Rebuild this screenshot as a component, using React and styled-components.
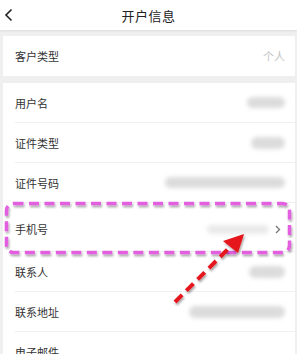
import styled, { createGlobalStyle } from "styled-components";

const GlobalStyle = createGlobalStyle`
  html, body { margin: 0; padding: 0; background: #efefef; }
  body { font-family: "Noto Sans CJK SC", "Noto Sans", sans-serif; }
`;

const rows = [
  { label: "用户名", blob: { w: 38, h: 11 } },
  { label: "证件类型", blob: { w: 34, h: 12 } },
  { label: "证件号码", blob: { w: 120, h: 11 } },
  { label: "手机号", blob: { w: 62, h: 9 }, arrow: true, tall: true },
  { label: "联系人", blob: { w: 36, h: 12 } },
  { label: "联系地址", blob: { w: 96, h: 12 } },
  { label: "电子邮件", blob: null },
];

export default function App() {
  return (
    <Page>
      <GlobalStyle />
      <Header>
        <Back>
          <svg width="10" height="14" viewBox="0 0 10 14">
            <path d="M7.5 1.5 L2 7 L7.5 12.5" fill="none" stroke="#222" strokeWidth="1.6" />
          </svg>
        </Back>
        <Title>开户信息</Title>
      </Header>
      <Card>
        <Row>
          <Label>客户类型</Label>
          <Value>个人</Value>
        </Row>
      </Card>
      <Card>
        {rows.map((r, i) => (
          <Row key={r.label} $tall={r.tall} $line={i < rows.length - 1}>
            <Label>{r.label}</Label>
            <Right>
              {r.blob && <Blob style={{ width: r.blob.w, height: r.blob.h }} $faint={r.arrow} />}
              {r.arrow && (
                <svg width="6" height="9" viewBox="0 0 6 9">
                  <path d="M1 1 L4.5 4.5 L1 8" fill="none" stroke="#777" strokeWidth="1.3" />
                </svg>
              )}
            </Right>
          </Row>
        ))}
      </Card>
      <Pointer width="297" height="354" viewBox="0 0 297 354">
        <defs>
          <filter id="sh" x="-20%" y="-20%" width="140%" height="140%">
            <feDropShadow dx="1" dy="2" stdDeviation="1.2" floodColor="#000" floodOpacity="0.35" />
          </filter>
        </defs>
        <g filter="url(#sh)">
          <rect x="6.5" y="203.5" width="283" height="49" rx="7" fill="none" stroke="#e25ee0" strokeWidth="3.5" strokeDasharray="10 5.5" />
        </g>
        <g filter="url(#sh)">
          <line x1="175" y1="302" x2="232" y2="245" stroke="#e5141b" strokeWidth="4" strokeDasharray="10 6" />
          <polygon points="244,234 223,241 238,253" fill="#e5141b" />
        </g>
      </Pointer>
    </Page>
  );
}

const Page = styled.div`
  position: relative;
  width: 297px;
  height: 354px;
  overflow: hidden;
  background: #efefef;
`;

const Header = styled.div`
  height: 30px;
  background: #fff;
  display: flex;
  align-items: center;
  justify-content: center;
  position: relative;
  box-shadow: 0 1px 2px rgba(0, 0, 0, 0.08);
  margin-bottom: 6px;
`;

const Back = styled.div`
  position: absolute;
  left: 4px;
  top: 8px;
  display: flex;
`;

const Title = styled.div`
  font-size: 13px;
  color: #222;
  letter-spacing: 0.5px;
`;

const Card = styled.div`
  background: #fff;
  margin: 0 2px 7px 3px;
`;

const Row = styled.div`
  height: ${(p) => (p.$tall ? 49 : 40)}px;
  margin-left: 12px;
  padding-right: ${(p) => (p.$tall ? 14 : 10)}px;
  display: flex;
  align-items: center;
  justify-content: space-between;
  border-bottom: ${(p) => (p.$line ? "1px solid #f0f0f0" : "none")};
  box-sizing: border-box;
  ${(p) => (p.$tall ? "padding-top: 4px;" : "")}
`;

const Label = styled.div`
  font-size: 11px;
  color: #333;
`;

const Value = styled.div`
  font-size: 11px;
  color: #c4c4c4;
`;

const Right = styled.div`
  display: flex;
  align-items: center;
  gap: 6px;
`;

const Blob = styled.div`
  background: ${(p) => (p.$faint ? "#eaeaea" : "#dcdcdc")};
  border-radius: 6px;
  filter: blur(2px);
`;

const Pointer = styled.svg`
  position: absolute;
  left: 0;
  top: 0;
  pointer-events: none;
`;
